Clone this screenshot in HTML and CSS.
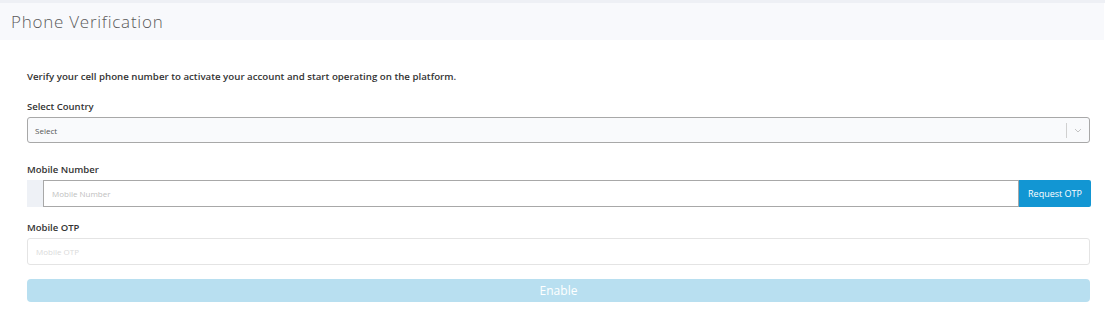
FILE: index.html
```html
<!DOCTYPE html>
<html lang="en">
<head>
  <meta charset="UTF-8">
  <meta name="viewport" content="width=device-width, initial-scale=1.0">
  <title>Phone Verification</title>
  <link rel="stylesheet" href="styles.css">
</head>
<body>
  <div class="topbar"></div>
  <div class="page-header">
    <h1>Phone Verification</h1>
  </div>

  <div class="content">
    <p class="intro">Verify your cell phone number to activate your account and start operating on the platform.</p>

    <label class="field-label">Select Country</label>
    <div class="select-box">
      <span class="select-placeholder">Select</span>
      <span class="select-indicator">
        <span class="select-sep"></span>
        <svg width="8" height="5" viewBox="0 0 8 5"><path d="M1 1l3 3 3-3" fill="none" stroke="#c4c4c4" stroke-width="1"/></svg>
      </span>
    </div>

    <label class="field-label label-gap">Mobile Number</label>
    <div class="input-group">
      <span class="input-prepend"></span>
      <input class="input-main" type="text" placeholder="Mobile Number">
      <button class="btn-otp">Request OTP</button>
    </div>

    <label class="field-label label-gap-sm">Mobile OTP</label>
    <input class="input-otp" type="text" placeholder="Mobile OTP">

    <button class="btn-enable" disabled>Enable</button>
  </div>
</body>
</html>
```

FILE: styles.css
```css
body {
  font-family: "Open Sans", Arial, sans-serif;
  margin: 0;
  padding: 0;
  background: white;
  color: #333;
}
.topbar {
  height: 3px;
  background: #eef0f5;
}
.page-header {
  height: 37px;
  background: #f8f9fc;
  padding-left: 11px;
  display: flex;
  align-items: center;
  margin-right: 1px;
}
.page-header h1 {
  margin: 0;
  font-size: 17px;
  font-weight: 300;
  color: #5a5a5a;
  letter-spacing: 0.75px;
}
.content {
  padding: 30px 14px 0 27px;
  display: flex;
  flex-direction: column;
}
.intro {
  margin: 0;
  font-size: 9.7px;
  font-weight: 600;
  line-height: 14px;
  color: #333;
}
.field-label {
  font-size: 9.5px;
  font-weight: 600;
  line-height: 13px;
  margin-top: 16px;
  margin-bottom: 4px;
  color: #333;
}
.label-gap {
  margin-top: 20px;
}
.label-gap-sm {
  margin-top: 14px;
}
.select-box {
  height: 24px;
  margin-right: 1px;
  border: 1px solid #a8a8a8;
  border-radius: 3px;
  background: #f9fafc;
  display: flex;
  align-items: center;
  justify-content: space-between;
  padding-left: 7px;
}
.select-placeholder {
  font-size: 8px;
  color: #555;
}
.select-indicator {
  display: flex;
  align-items: center;
  gap: 7px;
  padding-right: 7px;
}
.select-sep {
  width: 1px;
  height: 15px;
  background: #d0d0d0;
}
.input-group {
  display: flex;
  height: 27px;
}
.input-prepend {
  width: 16px;
  background: #eef1f6;
}
.input-main {
  flex: 1;
  border: 1px solid #a8a8a8;
  padding: 0 8px;
  font-family: inherit;
  font-size: 8px;
  outline: none;
}
.input-main::placeholder {
  color: #c0c0c0;
}
.btn-otp {
  width: 72px;
  border: none;
  border-radius: 0 2px 2px 0;
  background: #1296d3;
  color: white;
  font-family: inherit;
  font-size: 9px;
  padding: 0;
}
.input-otp {
  height: 27px;
  margin-right: 1px;
  box-sizing: border-box;
  border: 1px solid #e4e4e4;
  border-radius: 3px;
  padding: 0 8px;
  font-family: inherit;
  font-size: 8px;
  outline: none;
}
.input-otp::placeholder {
  color: #dadada;
}
.btn-enable {
  margin-top: 14px;
  margin-right: 1px;
  height: 23px;
  border: none;
  border-radius: 4px;
  background: #b8dff0;
  color: white;
  font-family: inherit;
  font-size: 12px;
  padding: 0;
}
```
